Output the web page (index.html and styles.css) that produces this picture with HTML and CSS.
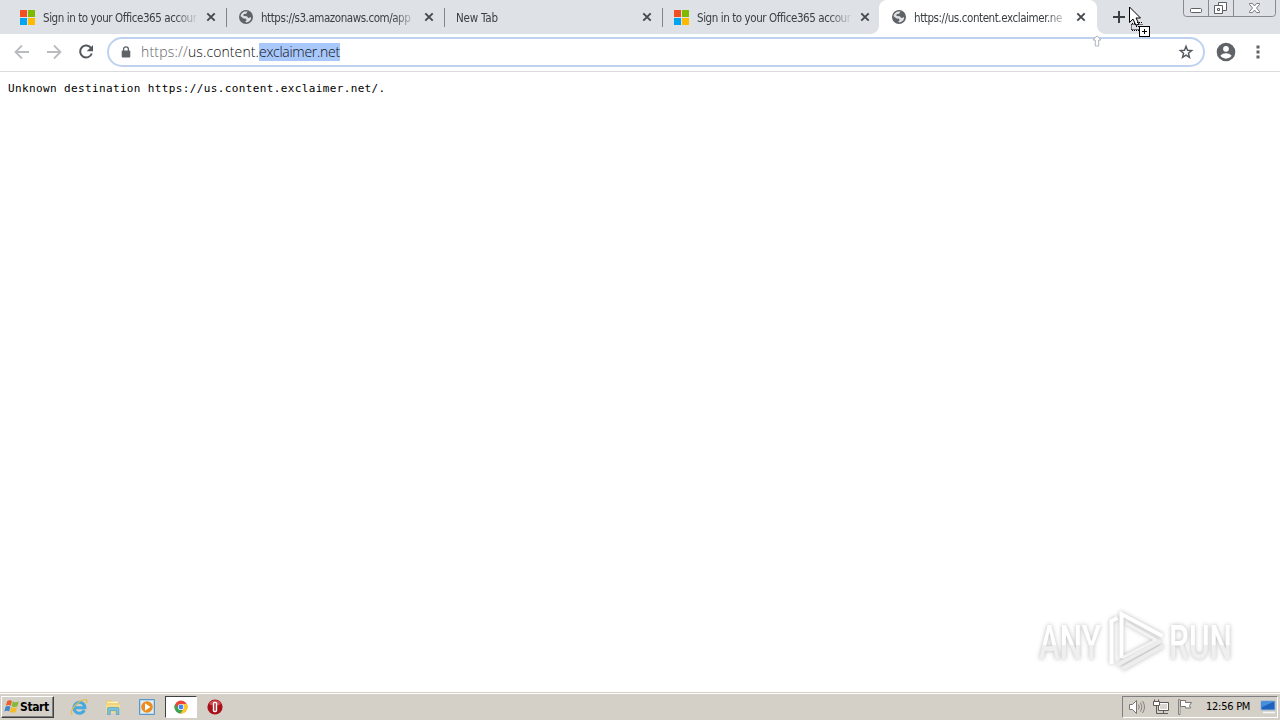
FILE: index.html
```html
<!DOCTYPE html>
<html lang="en">
<head>
    <meta charset="UTF-8">
    <meta name="viewport" content="width=device-width, initial-scale=1.0">
    <title>us.content.exclaimer.net</title>
    <link rel="stylesheet" href="styles.css">
</head>
<body>
    <svg class="defs" width="0" height="0">
        <symbol id="ms" viewBox="0 0 15 15">
            <path fill="#f25022" d="M0 0h7v7H0z"/>
            <path fill="#7fba00" d="M8 0h7v7H8z"/>
            <path fill="#00a4ef" d="M0 8h7v7H0z"/>
            <path fill="#ffb900" d="M8 8h7v7H8z"/>
        </symbol>
        <symbol id="globe" viewBox="0 0 16 16">
            <circle cx="8" cy="8" r="7" fill="#5f6368"/>
            <path fill="#dee1e6" d="M9.5 2.6 8.2 4.7 5.7 5.1 5.4 6.9 8.9 7.3 10.2 8.9 12.9 8.3 13.2 9.3C12.6 11.7 10.5 13.4 8.2 13.4L7.2 12.6 8.6 11.2 8 9.8 5.6 9.5 2.6 7.3C2.8 4.6 5.2 2.5 8 2.5z"/>
        </symbol>
        <symbol id="close" viewBox="0 0 10 10">
            <path d="M1.300 1.300l7.400 7.400M8.700 1.300L1.300 8.700" stroke="#45494d" stroke-width="1.900" fill="none"/>
        </symbol>
    </svg>

    <div class="tabs">
        <div class="tab">
            <svg class="fav ms"><use href="#ms"/></svg>
            <span class="title">Sign in to your Office365 accour</span>
            <svg class="close"><use href="#close"/></svg>
        </div>
        <div class="tab line">
            <svg class="fav"><use href="#globe"/></svg>
            <span class="title url1">https://s3.amazonaws.com/app</span>
            <svg class="close"><use href="#close"/></svg>
        </div>
        <div class="tab line">
            <span class="title newtab">New Tab</span>
            <svg class="close"><use href="#close"/></svg>
        </div>
        <div class="tab line">
            <svg class="fav ms"><use href="#ms"/></svg>
            <span class="title">Sign in to your Office365 accour</span>
            <svg class="close"><use href="#close"/></svg>
        </div>
        <div class="tab active">
            <svg class="fav"><use href="#globe"/></svg>
            <span class="title url2">https://us.content.exclaimer.ne</span>
            <svg class="close"><use href="#close"/></svg>
        </div>
        <svg class="plus" width="12" height="12" viewBox="0 0 12 12"><path d="M6 0v12M0 6h12" stroke="#3c4043" stroke-width="2"/></svg>
        <svg class="winbtns" width="94" height="18" viewBox="0 0 94 18">
            <path d="M.5 0v13.500q0 3 3 3h86q3 0 3-3V0M25.500 0v16M50.500 0v16" fill="none" stroke="#868b93"/>
            <rect x="7.500" y="8.500" width="11" height="4" rx="1" fill="#fff" stroke="#5b5f66"/>
            <path d="M35.500 2.500h8v8h-8z" fill="#fff" stroke="#5b5f66"/>
            <path d="M31.500 5.500h8v8h-8z" fill="#fff" stroke="#5b5f66"/>
            <path d="M34.500 8.500h2v2h-2z" fill="none" stroke="#5b5f66"/>
            <path d="M66.500 3.500h3l2 2.500 2-2.500h3v1l-3 3.500 3 3.500v1h-3l-2-2.500-2 2.500h-3v-1l3-3.500-3-3.500z" fill="#fff" stroke="#6b6f76" stroke-width=".9"/>
        </svg>
    </div>

    <div class="toolbar">
        <svg class="nav" width="16" height="16" viewBox="0 0 16 16"><path d="M15 8H2M8 1.500L1.500 8 8 14.500" fill="none" stroke="#b9bbbe" stroke-width="1.800"/></svg>
        <svg class="nav" width="16" height="16" viewBox="0 0 16 16"><path d="M1 8h13M8 1.500L14.500 8 8 14.500" fill="none" stroke="#b9bbbe" stroke-width="1.800"/></svg>
        <svg class="nav" width="16" height="16" viewBox="0 0 16 16"><path d="M13.200 4.300A6 6 0 1 0 13.800 9.500" fill="none" stroke="#54585c" stroke-width="2"/><path d="M15 1v6.300H8.700z" fill="#54585c"/></svg>
        <div class="omnibox">
            <svg class="lock" width="10" height="12" viewBox="0 0 10 12"><path d="M2.600 5V3.200a2.400 2.400 0 0 1 4.800 0V5" fill="none" stroke="#5f6368" stroke-width="1.300"/><rect x=".7" y="4.400" width="8.600" height="7.200" rx="1" fill="#5f6368"/></svg>
            <span class="address"><span class="scheme">https://</span><span class="host">us.content.</span><span class="sel">exclaimer.net</span></span>
            <svg class="star" width="16" height="16" viewBox="0 0 16 16"><path d="M8 2.300l1.500 4 4.200.2-3.300 2.700 1.100 4.200L8 11.100l-3.500 2.300 1.100-4.200-3.300-2.700 4.200-.2z" fill="none" stroke="#54585c" stroke-width="1.400"/></svg>
        </div>
        <svg class="avatar" width="20" height="20" viewBox="0 0 20 20"><circle cx="10" cy="10" r="9.300" fill="#5f6368"/><circle cx="10" cy="6.800" r="2.900" fill="#fff"/><path d="M4.400 13.700c1.100-1.700 3.700-2.500 5.600-2.500s4.500.8 5.600 2.500a6.800 6.800 0 0 1-11.200 0z" fill="#fff"/></svg>
        <svg class="dots" width="4" height="14" viewBox="0 0 4 14"><path d="M.5 .5h3v3h-3zM.5 5.500h3v3h-3zM.5 10.500h3v3h-3z" fill="#5f6368"/></svg>
    </div>

    <div class="content">
        <pre>Unknown destination https://us.content.exclaimer.net/.</pre>
    </div>

    <div class="taskbar">
        <div class="start">
            <svg width="16" height="15" viewBox="0 0 16 15">
                <path d="M3.200 2C5 .8 6.600 1 8 2L6.700 6.800C5.200 5.800 3.500 5.800 1.900 6.700z" fill="#e8602c"/>
                <path d="M8.800 2.400c1.800 1.100 3.800 1 6 0L13.400 7.200c-2 1-4.100 1-5.900-.1z" fill="#86b83c"/>
                <path d="M1.600 7.700c1.600-.9 3.300-.9 4.800 0L5.100 12.400C3.700 11.500 2 11.500.3 12.400z" fill="#3d87cd"/>
                <path d="M7.200 8.100c1.900 1 3.900 1 5.900.1L11.700 13c-2 .9-4.100.9-5.900-.2z" fill="#f5bc29"/>
            </svg>
            <b>Start</b>
        </div>
        <div class="app ie">
            <svg width="18" height="18" viewBox="0 0 18 18"><path d="M14.300 12.200A5.500 5.500 0 1 1 14.900 9.700H5.500" fill="none" stroke="#48a9df" stroke-width="3"/><path d="M2.500 16.500C-1.500 15 5 5 13 2c4-1.400 4.600.6 3 3.200" fill="none" stroke="#e6bc45" stroke-width="1.300"/></svg>
        </div>
        <div class="app folder">
            <svg width="16" height="16" viewBox="0 0 16 16"><path d="M1 2l5-1 1 1.500 7 .5v10H1z" fill="#edca68"/><path d="M2 3.500h11" stroke="#fff5c3" stroke-width="1.500"/><path d="M1 5.500h14V14H1z" fill="#f6dc8d"/><path d="M2.500 15.500V9.500q0-1 1-1h9.500q1 0 1 1v6h-2.800v-3.800H5.300v3.800z" fill="#74c0df" stroke="#3c91ba" stroke-width=".5"/></svg>
        </div>
        <div class="app">
            <svg width="16" height="16" viewBox="0 0 16 16"><path d="M.5 .5h15v15H.5z" fill="#b8d8ee" stroke="#5797c9"/><path d="M2 2h12v12H2z" fill="#e3eef3"/><circle cx="8" cy="8" r="5.800" fill="#ed8b1c"/><path d="M6 4.200l5.500 3.800L6 11.800z" fill="#fff"/></svg>
        </div>
        <div class="app pressed">
            <svg width="14" height="14" viewBox="0 0 14 14"><circle cx="7" cy="7" r="6.500" fill="#ed4637"/><path d="M1.400 3.700A6.500 6.500 0 0 0 6.500 13.500L9.800 8.600 7 7 4.200 8.600z" fill="#36a852"/><path d="M6.500 13.500A6.500 6.500 0 0 0 12.700 3.900H7l2.800 4.700z" fill="#fbca24"/><circle cx="7" cy="7" r="3.100" fill="#fff"/><circle cx="7" cy="7" r="2.400" fill="#4285f4"/></svg>
        </div>
        <div class="app opera">
            <svg width="16" height="16" viewBox="0 0 16 16"><circle cx="8" cy="8" r="7.600" fill="#a91119"/><path d="M2 5a6.700 6.700 0 0 1 12 0C11 7 5 7 2 5z" fill="#cf4b4f"/><rect x="5.800" y="2.800" width="4.400" height="10.400" rx="1.800" fill="#fff"/><rect x="7.300" y="4" width="1.400" height="8" rx=".7" fill="#a91119"/></svg>
        </div>
        <div class="tray">
            <svg width="18" height="16" viewBox="0 0 18 16"><path d="M1.500 5.500h3l4-4v13l-4-4h-3z" fill="#fff" stroke="#77746e"/><path d="M10.500 5.500q1.500 2.500 0 5M12.500 3.500q3 4.500 0 9M14.500 2q4 6 0 12" fill="none" stroke="#85827c"/></svg>
            <svg class="net" width="16" height="16" viewBox="0 0 16 16"><path d="M5.500 3.500h10v8h-10z" fill="#d9d6cf" stroke="#5e5b56"/><path d="M6.500 4.500h8v6h-8z" fill="none" stroke="#fff"/><path d="M.5 2.500h6v4h-6zM1.500 .5v2M5.500 .5v2" fill="#fff" stroke="#5e5b56"/><path d="M3.500 7v7.500H7M6 14.500h9M10.500 11.500v3" fill="none" stroke="#5e5b56"/></svg>
            <svg class="flag" width="16" height="16" viewBox="0 0 16 16"><path d="M1.500 .5h1.500v15H1.500z" fill="#fff" stroke="#6d6a65" stroke-width=".8"/><path d="M3.500 1.500h5v2h6l-2 3 1 2.500H8.500V7.500h-5z" fill="#fff" stroke="#6d6a65" stroke-width=".9"/></svg>
            <span class="clock">12:56 PM</span>
            <svg class="desk" width="16" height="14" viewBox="0 0 16 14"><path d="M1 1h14v9H1z" fill="#1e62bd" stroke="#93b5da"/><path d="M1.500 1.500h13L2 7z" fill="#458fdc"/><path d="M3 12.500h12" stroke="#f4f7fa" stroke-width="1.500"/></svg>
        </div>
    </div>

    <svg class="watermark" width="204" height="70" viewBox="0 0 204 70">
        <defs>
            <linearGradient id="fade" x1="0" y1="0" x2="0" y2="1"><stop offset=".55" stop-color="#fff"/><stop offset=".55" stop-color="#efefef"/></linearGradient>
        </defs>
        <g class="mark">
            <text x="5" y="53" textLength="62" lengthAdjust="spacingAndGlyphs">ANY</text>
            <text x="135" y="53" textLength="63" lengthAdjust="spacingAndGlyphs">RUN</text>
            <path d="M87.500 52V8l41 22" fill="none" stroke="#fff" stroke-width="4"/>
            <path d="M77.500 58V15l6-3" fill="none" stroke="#fff" stroke-width="4"/>
            <path d="M127 35L83 59M129 40L88 63" fill="none" stroke="#ededed" stroke-width="4"/>
            <path d="M92 17l30 17-34 18" fill="none" stroke="#f3f3f3" stroke-width="3"/>
        </g>
    </svg>

    <svg class="cursor" width="24" height="34" viewBox="0 0 24 34">
        <path d="M1.500 1v15.500l3.500-3.500 3 6.500 3-1.500-3-6h4.500z" fill="#fff" stroke="#000"/>
        <path d="M3.500 18.500h12M3.500 23.500h7M3.500 18.500v5M9 16.500h6" fill="none" stroke="#000" stroke-dasharray="1 1"/>
        <path d="M4 17.500h3M4 24.500h7M8 20.500h4" fill="none" stroke="#000" stroke-dasharray="1 1"/>
        <rect x="11.500" y="20.500" width="10" height="10" fill="#fff" stroke="#000"/>
        <path d="M14 25.500h5M16.500 23v5" stroke="#000"/>
    </svg>
    <svg class="drop" width="10" height="12" viewBox="0 0 10 12"><path d="M5 .8L9 5H6.700v6H3.300V5H1z" fill="#fff" stroke="#aeb4bd"/></svg>
</body>
</html>
```
FILE: styles.css
```css
* {
    margin: 0;
    padding: 0;
    box-sizing: border-box;
}

body {
    width: 1280px;
    height: 720px;
    overflow: hidden;
    display: flex;
    flex-direction: column;
    background: #fff;
    font-family: "DejaVu Sans Condensed", "DejaVu Sans", sans-serif;
}

svg {
    display: block;
    flex: none;
}

.defs {
    position: absolute;
}

/* tabs */
.tabs {
    height: 34px;
    display: flex;
    padding-left: 8px;
    background: #dee1e6;
}

.tab {
    position: relative;
    width: 218px;
    height: 34px;
    flex: none;
    display: flex;
    align-items: center;
    padding: 0 10px 0 12px;
}

.line::before {
    content: "";
    position: absolute;
    left: 0;
    top: 8px;
    width: 1px;
    height: 19px;
    background: #80858c;
}

.fav {
    width: 16px;
    height: 16px;
    margin-right: 7px;
}

.ms {
    width: 15px;
    height: 15px;
    margin-right: 8px;
}

.title {
    width: 157px;
    flex: none;
    white-space: nowrap;
    font-size: 11.5px;
    line-height: 16px;
    padding-top: 1px;
    letter-spacing: -0.42px;
    color: #3c4043;
    -webkit-mask-image: linear-gradient(to right, #000 132px, transparent 156px);
    mask-image: linear-gradient(to right, #000 132px, transparent 156px);
}

.url1 {
    letter-spacing: -0.45px;
}

.newtab {
    width: 178px;
    letter-spacing: -0.2px;
}

.close {
    width: 10px;
    height: 10px;
    margin-left: auto;
}

.active {
    margin-left: -1px;
    padding-right: 11px;
    background: #fff;
    border-radius: 8px 8px 0 0;
}

.active::before,
.active::after {
    content: "";
    position: absolute;
    bottom: 0;
    width: 8px;
    height: 8px;
}

.active::before {
    left: -8px;
    background: radial-gradient(circle at 0 0, transparent 7.5px, #fff 8px);
}

.active::after {
    right: -8px;
    background: radial-gradient(circle at 100% 0, transparent 7.5px, #fff 8px);
}

.plus {
    margin: 11px 0 0 16px;
}

.winbtns {
    margin-left: auto;
    margin-right: 3px;
}

/* address bar */
.toolbar {
    height: 38px;
    display: flex;
    align-items: center;
    padding: 0 20px 2px 14px;
    border-bottom: 1px solid #d9dbde;
}

.nav {
    margin-right: 16px;
}

.omnibox {
    width: 1098px;
    height: 30px;
    margin-left: -3px;
    display: flex;
    align-items: center;
    padding: 0 9px 0 12px;
    border: 2px solid #bed2ef;
    border-radius: 15px;
}

.address {
    margin-left: 10px;
    font-family: "Open Sans", "Noto Sans", sans-serif;
    font-weight: 300;
    font-size: 14px;
    line-height: 18px;
    white-space: nowrap;
    color: #101114;
}

.scheme {
    color: #5f6368;
    letter-spacing: 0.2px;
}

.host {
    letter-spacing: 0.1px;
}

.sel {
    display: inline-block;
    background: #a8c7fa;
    letter-spacing: -0.28px;
}

.star {
    margin-left: auto;
}

.avatar {
    margin-left: 11px;
}

.dots {
    margin-left: auto;
}

/* page */
.content {
    flex: 1;
    padding: 9px 8px;
}

.content pre {
    font-family: "DejaVu Sans Mono", monospace;
    font-size: 11px;
    line-height: 16px;
    letter-spacing: 0.37px;
    color: #000;
}

/* taskbar */
.taskbar {
    height: 28px;
    display: flex;
    align-items: center;
    padding: 2px 2px 2px 1px;
    background: #d4d0c8;
    border-top: 1px solid #d4d0c8;
    box-shadow: inset 0 1px #fff;
}

.start {
    width: 53px;
    height: 22px;
    display: flex;
    align-items: center;
    padding-left: 2px;
    border: 1px solid;
    border-color: #fff #404040 #404040 #fff;
    box-shadow: inset -1px -1px #808080;
    font-size: 12px;
    letter-spacing: -0.4px;
}

.app {
    width: 32px;
    height: 22px;
    margin-right: 2px;
    display: flex;
    align-items: center;
    justify-content: center;
}

.ie {
    margin-left: 9px;
}

.pressed {
    background: #fff;
    border: 1px solid;
    border-color: #404040 #fff #fff #404040;
}

.tray {
    width: 156px;
    height: 22px;
    margin-left: auto;
    display: flex;
    align-items: center;
    padding: 0 1px 0 5px;
    border: 1px solid;
    border-color: #808080 #fff #fff #808080;
}

.net {
    margin-left: 7px;
}

.flag {
    margin-left: 8px;
}

.clock {
    margin-left: 13px;
    font-size: 11px;
    letter-spacing: -0.25px;
    white-space: nowrap;
}

.desk {
    margin-left: auto;
}

/* overlays */
.watermark {
    position: absolute;
    left: 1034px;
    top: 606px;
}

.mark {
    filter: drop-shadow(0 0 2px rgba(0, 0, 0, 0.28));
}

.mark text {
    font-family: Roboto, sans-serif;
    font-weight: 500;
    font-size: 48px;
    fill: url(#fade);
}

.cursor {
    position: absolute;
    left: 1128px;
    top: 6px;
}

.drop {
    position: absolute;
    left: 1092px;
    top: 35px;
}
```
